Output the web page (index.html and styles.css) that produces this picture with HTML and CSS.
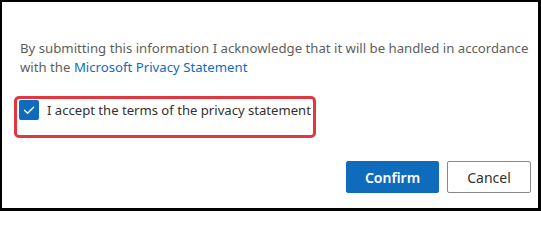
FILE: index.html
```html
<!DOCTYPE html>
<html lang="en">
<head>
<meta charset="utf-8">
<title>Privacy consent</title>
<link rel="stylesheet" href="styles.css">
</head>
<body>
<div class="dialog">
  <p class="notice"><span class="line">By submitting this information I acknowledge that it will be handled in accordance</span><span class="line">with the <a class="link" href="#">Microsoft Privacy Statement</a></span></p>
  <label class="consent">
    <span class="checkbox">
      <svg viewBox="0 0 20 20" width="20" height="20" aria-hidden="true"><path d="M5.5 10.2 L8.6 13.2 L14.6 7.2" fill="none" stroke="#fff" stroke-width="1.3" stroke-linecap="round" stroke-linejoin="round"/></svg>
    </span>
    <span class="consent-text">I accept the terms of the privacy statement</span>
  </label>
  <div class="actions">
    <button class="btn btn-primary">Confirm</button>
    <button class="btn btn-default">Cancel</button>
  </div>
</div>
</body>
</html>
```
FILE: styles.css
```css
html, body {
  margin: 0;
  padding: 0;
  background: #fff;
}
.dialog {
  box-sizing: border-box;
  width: 541px;
  height: 211px;
  border: 2px solid #000;
  border-right-width: 3px;
  border-bottom-width: 3px;
  padding: 37px 7px 0 18px;
  display: flex;
  flex-direction: column;
  font-family: "Noto Sans", "Open Sans", sans-serif;
  font-size: 13.2px;
}
.notice {
  margin: 0;
  line-height: 19px;
  color: #605e5c;
}
.line {
  display: block;
  white-space: nowrap;
}
.link {
  color: #0f6cbd;
  text-decoration: none;
}
.consent {
  align-self: flex-start;
  margin: 19px 0 0 -6px;
  border: 3px solid #e2373f;
  border-radius: 5px;
  padding: 1px 2px 15px 2px;
  display: flex;
  align-items: center;
  gap: 8px;
}
.checkbox {
  width: 20px;
  height: 20px;
  border-radius: 2px;
  background: #0f6cbd;
  display: flex;
}
.consent-text {
  color: #323130;
  line-height: 20px;
  font-size: 13.1px;
}
.actions {
  margin-top: 23px;
  display: flex;
  justify-content: flex-end;
  gap: 8px;
}
.btn {
  box-sizing: border-box;
  height: 32px;
  border-radius: 2px;
  font-family: inherit;
  font-size: 14px;
  padding: 0;
}
.btn-primary {
  width: 93px;
  background: #0f6cbd;
  border: 1px solid #0f6cbd;
  color: #fff;
  font-weight: 600;
}
.btn-default {
  width: 84px;
  background: #fff;
  border: 1px solid #8a8886;
  color: #323130;
}
```
